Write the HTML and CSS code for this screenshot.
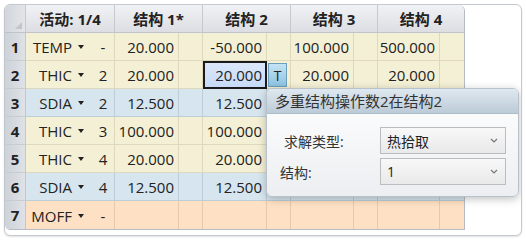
FILE: index.html
```html
<!DOCTYPE html>
<html lang="zh">
<head>
    <meta charset="UTF-8">
    <title>多重结构编辑器</title>
    <link rel="stylesheet" href="styles.css">
</head>
<body>
    <div class="frame">
        <!-- Multi-configuration table -->
        <table class="mce">
            <colgroup>
                <col class="c-num">
                <col class="c-op">
                <col class="c-val"><col class="c-sol">
                <col class="c-val"><col class="c-sol">
                <col class="c-val3"><col class="c-sol">
                <col class="c-val4"><col class="c-sol">
            </colgroup>
            <thead>
                <tr>
                    <th class="corner"><span class="corner-mark"></span></th>
                    <th>活动: 1/4</th>
                    <th colspan="2">结构 1*</th>
                    <th colspan="2">结构 2</th>
                    <th colspan="2">结构 3</th>
                    <th colspan="2" class="last-h">结构 4</th>
                </tr>
            </thead>
            <tbody>
                <tr class="cream">
                    <td class="num">1</td>
                    <td class="op"><span class="op-name">TEMP</span><span class="caret"></span><span class="op-arg">-</span></td>
                    <td class="val">20.000</td><td></td>
                    <td class="val">-50.000</td><td></td>
                    <td class="val">100.000</td><td></td>
                    <td class="val">500.000</td><td></td>
                </tr>
                <tr class="cream">
                    <td class="num">2</td>
                    <td class="op"><span class="op-name">THIC</span><span class="caret"></span><span class="op-arg">2</span></td>
                    <td class="val">20.000</td><td></td>
                    <td class="val selected">20.000</td><td class="sol"><span class="sol-btn">T</span></td>
                    <td class="val">20.000</td><td></td>
                    <td class="val">20.000</td><td></td>
                </tr>
                <!-- columns 3 and 4 of rows 3-6 sit under the popup -->
                <tr class="blue">
                    <td class="num">3</td>
                    <td class="op"><span class="op-name">SDIA</span><span class="caret"></span><span class="op-arg">2</span></td>
                    <td class="val">12.500</td><td></td>
                    <td class="val">12.500</td><td></td>
                    <td class="val"></td><td></td>
                    <td class="val"></td><td></td>
                </tr>
                <tr class="cream">
                    <td class="num">4</td>
                    <td class="op"><span class="op-name">THIC</span><span class="caret"></span><span class="op-arg">3</span></td>
                    <td class="val">100.000</td><td></td>
                    <td class="val">100.000</td><td></td>
                    <td class="val"></td><td></td>
                    <td class="val"></td><td></td>
                </tr>
                <tr class="cream">
                    <td class="num">5</td>
                    <td class="op"><span class="op-name">THIC</span><span class="caret"></span><span class="op-arg">4</span></td>
                    <td class="val">20.000</td><td></td>
                    <td class="val">20.000</td><td></td>
                    <td class="val"></td><td></td>
                    <td class="val"></td><td></td>
                </tr>
                <tr class="blue">
                    <td class="num">6</td>
                    <td class="op"><span class="op-name">SDIA</span><span class="caret"></span><span class="op-arg">4</span></td>
                    <td class="val">12.500</td><td></td>
                    <td class="val">12.500</td><td></td>
                    <td class="val"></td><td></td>
                    <td class="val"></td><td></td>
                </tr>
                <tr class="peach">
                    <td class="num">7</td>
                    <td class="op"><span class="op-name">MOFF</span><span class="caret"></span><span class="op-arg">-</span></td>
                    <td class="val"></td><td></td>
                    <td class="val"></td><td></td>
                    <td class="val"></td><td></td>
                    <td class="val"></td><td></td>
                </tr>
            </tbody>
        </table>

        <!-- Solve type popup -->
        <div class="popup">
            <div class="popup-title">多重结构操作数2在结构2</div>
            <div class="popup-body">
                <label class="field-label indent">求解类型:</label>
                <div class="combo">
                    <span>热拾取</span>
                    <svg class="chevron" viewBox="0 0 8 5" fill="none" stroke="currentColor" stroke-width="1.2">
                        <path d="M1 1l3 3 3-3"/>
                    </svg>
                </div>
                <label class="field-label">结构:</label>
                <div class="combo">
                    <span>1</span>
                    <svg class="chevron" viewBox="0 0 8 5" fill="none" stroke="currentColor" stroke-width="1.2">
                        <path d="M1 1l3 3 3-3"/>
                    </svg>
                </div>
            </div>
        </div>
    </div>
</body>
</html>
```

FILE: styles.css
```css
/* Base */
* {
    margin: 0;
    padding: 0;
    box-sizing: border-box;
}

body {
    font-family: "Open Sans", "Noto Sans CJK SC", sans-serif;
    font-size: 15px;
    color: #222;
    background: #fff;
    padding: 4px;
}

/* Outer frame */
.frame {
    position: relative;
    width: 518px;
    height: 232px;
    border: 1px solid #c4c8cf;
    border-radius: 6px;
    background: #fff;
    box-shadow: 0 1px 2px rgba(0, 0, 0, 0.12);
    overflow: hidden;
}

/* Table */
.mce {
    table-layout: fixed;
    border-collapse: separate;
    border-spacing: 0;
    width: 459px;
    border-bottom-left-radius: 5px;
    border-top-right-radius: 6px;
    overflow: hidden;
    border-right: 1px solid #b7bcc4;
    border-bottom: 1px solid #b7bcc4;
}

.c-num { width: 21px; }
.c-op { width: 89px; }
.c-val { width: 64px; }
.c-val3 { width: 63px; }
.c-val4 { width: 62px; }
.c-sol { width: 24px; }

thead tr {
    height: 28px;
}

th {
    font-weight: 700;
    text-align: center;
    background: linear-gradient(#f1f2f5, #dcdee3);
    border-right: 1px solid #c6c9cf;
    border-bottom: 1px solid #c0c3c9;
    white-space: nowrap;
}

th.last-h {
    border-right: none;
    border-top-right-radius: 6px;
}

th.corner {
    position: relative;
    background: linear-gradient(to right, #d2d6dc, #e2e4e8);
}

.corner-mark {
    position: absolute;
    right: 3px;
    bottom: 3px;
    width: 0;
    height: 0;
    border-left: 7px solid transparent;
    border-bottom: 7px solid #c2c5ca;
}

tbody tr {
    height: 28px;
}

td {
    border-right: 1px solid rgba(120, 110, 80, 0.18);
    border-bottom: 1px solid rgba(120, 110, 80, 0.18);
    white-space: nowrap;
}

tr.cream td { background: #f4f0d5; }
tr.blue td { background: #d7e6ee; border-color: rgba(80, 110, 130, 0.2); }
tr.peach td { background: #fee0c4; border-color: rgba(140, 100, 60, 0.18); }

tbody tr:last-child td {
    border-bottom: none;
}

tbody tr td:last-child {
    border-right: none;
}

/* Row numbers */
tr td.num {
    font-weight: 700;
    text-align: center;
    background: linear-gradient(to right, #cdd2d9, #dfe2e6);
    border-right: 1px solid #c3c7cd;
    border-bottom: 1px solid #c9ccd1;
}

/* Operand cell */
.op {
    padding: 0;
}

.op-name {
    display: inline-block;
    width: 46px;
    text-align: right;
    vertical-align: middle;
}

.caret {
    display: inline-block;
    width: 0;
    height: 0;
    margin-left: 6px;
    border-left: 3.5px solid transparent;
    border-right: 3.5px solid transparent;
    border-top: 4px solid #222;
    vertical-align: middle;
}

.op-arg {
    display: inline-block;
    width: 20px;
    margin-left: 9px;
    text-align: center;
    vertical-align: middle;
}

/* Values */
.val {
    text-align: right;
    padding-right: 4px;
}

.val.selected {
    background: linear-gradient(#dde9fb, #c6daf6) !important;
    outline: 2px solid #1b1b1b;
    outline-offset: -2px;
}

.sol {
    padding: 1px 3px 1px 1px;
}

.sol-btn {
    display: block;
    height: 24px;
    line-height: 23px;
    text-align: center;
    font-size: 14px;
    color: #222;
    border: 1px solid #6d9fbd;
    background: linear-gradient(#c3e3f3, #8dc3e1);
}

/* Popup */
.popup {
    position: absolute;
    left: 261px;
    top: 83px;
    width: 253px;
    height: 109px;
    border: 1px solid #b9c2cb;
    border-radius: 6px;
    background: linear-gradient(#ffffff, #eceef1);
    box-shadow: 0 2px 8px rgba(0, 0, 0, 0.25);
    overflow: hidden;
}

.popup-title {
    height: 25px;
    line-height: 24px;
    padding-left: 8px;
    font-size: 15px;
    color: #333;
    background: linear-gradient(#dfe8ef, #bccbd8);
    border-bottom: 1px solid #aebdca;
}

.popup-body {
    display: grid;
    grid-template-columns: 1fr 126px;
    grid-auto-rows: 27px;
    row-gap: 4px;
    align-items: center;
    padding: 13px 12px 0 13px;
}

.field-label {
    font-size: 14px;
    color: #333;
}

.field-label.indent {
    padding-left: 4px;
}

.combo {
    display: flex;
    align-items: center;
    justify-content: space-between;
    height: 27px;
    padding: 0 7px 0 6px;
    font-size: 14px;
    color: #222;
    border: 1px solid #bcbcbc;
    background: linear-gradient(#f8f8f8, #e9e9e9);
}

.chevron {
    width: 8px;
    height: 5px;
    color: #777;
}
```
